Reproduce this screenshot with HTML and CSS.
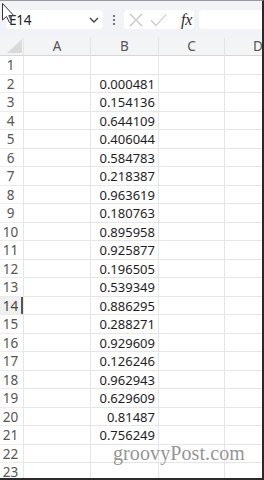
FILE: index.html
```html
<!DOCTYPE html>
<html>
<head>
<meta charset="utf-8">
<link rel="stylesheet" href="styles.css">
</head>
<body>
<div class="frame">
  <div class="toolbar">
    <div class="namebox">
      <span class="ref">E14</span>
      <svg class="chev" width="10" height="6" viewBox="0 0 10 6"><path d="M1 1 L5 5 L9 1" fill="none" stroke="#444" stroke-width="1.4"/></svg>
    </div>
    <svg class="kebab" width="4" height="12" viewBox="0 0 4 12"><circle cx="2" cy="2" r="1.1" fill="#555"/><circle cx="2" cy="6" r="1.1" fill="#555"/><circle cx="2" cy="10" r="1.1" fill="#555"/></svg>
    <div class="fxbox">
      <svg width="14" height="14" viewBox="0 0 14 14"><path d="M1 1 L13 13 M13 1 L1 13" stroke="#c4c4c4" stroke-width="1.1" fill="none"/></svg>
      <svg width="17" height="14" viewBox="0 0 17 14"><path d="M1 7.5 L6 12.5 L16 1.5" stroke="#c4c4c4" stroke-width="1.1" fill="none"/></svg>
      <span class="fx">fx</span>
    </div>
    <div class="formula"></div>
  </div>
  <div class="sheet">
    <div class="corner"><svg width="15" height="14" viewBox="0 0 15 14"><path d="M15 0 L15 14 L0 14 Z" fill="#dadada"/></svg></div>
    <div class="colh">A</div><div class="colh">B</div><div class="colh">C</div><div class="colh last">D</div>

    <div class="rowh">1</div><div class="cell"></div><div class="cell"></div><div class="cell"></div><div class="cell"></div>
    <div class="rowh">2</div><div class="cell"></div><div class="cell num">0.000481</div><div class="cell"></div><div class="cell"></div>
    <div class="rowh">3</div><div class="cell"></div><div class="cell num">0.154136</div><div class="cell"></div><div class="cell"></div>
    <div class="rowh">4</div><div class="cell"></div><div class="cell num">0.644109</div><div class="cell"></div><div class="cell"></div>
    <div class="rowh">5</div><div class="cell"></div><div class="cell num">0.406044</div><div class="cell"></div><div class="cell"></div>
    <div class="rowh">6</div><div class="cell"></div><div class="cell num">0.584783</div><div class="cell"></div><div class="cell"></div>
    <div class="rowh">7</div><div class="cell"></div><div class="cell num">0.218387</div><div class="cell"></div><div class="cell"></div>
    <div class="rowh">8</div><div class="cell"></div><div class="cell num">0.963619</div><div class="cell"></div><div class="cell"></div>
    <div class="rowh">9</div><div class="cell"></div><div class="cell num">0.180763</div><div class="cell"></div><div class="cell"></div>
    <div class="rowh">10</div><div class="cell"></div><div class="cell num">0.895958</div><div class="cell"></div><div class="cell"></div>
    <div class="rowh">11</div><div class="cell"></div><div class="cell num">0.925877</div><div class="cell"></div><div class="cell"></div>
    <div class="rowh">12</div><div class="cell"></div><div class="cell num">0.196505</div><div class="cell"></div><div class="cell"></div>
    <div class="rowh">13</div><div class="cell"></div><div class="cell num">0.539349</div><div class="cell"></div><div class="cell"></div>
    <div class="rowh sel">14</div><div class="cell"></div><div class="cell num">0.886295</div><div class="cell"></div><div class="cell"></div>
    <div class="rowh">15</div><div class="cell"></div><div class="cell num">0.288271</div><div class="cell"></div><div class="cell"></div>
    <div class="rowh">16</div><div class="cell"></div><div class="cell num">0.929609</div><div class="cell"></div><div class="cell"></div>
    <div class="rowh">17</div><div class="cell"></div><div class="cell num">0.126246</div><div class="cell"></div><div class="cell"></div>
    <div class="rowh">18</div><div class="cell"></div><div class="cell num">0.962943</div><div class="cell"></div><div class="cell"></div>
    <div class="rowh">19</div><div class="cell"></div><div class="cell num">0.629609</div><div class="cell"></div><div class="cell"></div>
    <div class="rowh">20</div><div class="cell"></div><div class="cell num">0.81487</div><div class="cell"></div><div class="cell"></div>
    <div class="rowh">21</div><div class="cell"></div><div class="cell num">0.756249</div><div class="cell"></div><div class="cell"></div>
    <div class="rowh">22</div><div class="cell"></div><div class="cell"></div><div class="cell"></div><div class="cell"></div>
    <div class="rowh">23</div><div class="cell"></div><div class="cell"></div><div class="cell"></div><div class="cell"></div>
  </div>
  <svg class="cursor" width="14" height="22" viewBox="0 0 14 22"><path d="M1.5 1.5 L1.5 18 L5.5 14.5 L8.5 20.5 L10.5 19.5 L7.8 13.6 L12.8 13.6 Z" fill="#fff" stroke="#333" stroke-width="1"/></svg>
  <div class="watermark">groovyPost.com</div>
</div>
</body>
</html>
```
FILE: styles.css
```css
html, body {
  margin: 0;
  padding: 0;
  background: #fff;
}
.frame {
  position: relative;
  width: 264px;
  height: 480px;
  box-sizing: border-box;
  border-top: 1px solid #9a9a9a;
  border-right: 2px solid #2a2a2a;
  border-bottom: 2px solid #2a2a2a;
  overflow: hidden;
  font-family: "Noto Sans", "Open Sans", sans-serif;
  background: #fff;
}
.toolbar {
  height: 37px;
  background: #f1f3f6;
  display: flex;
  align-items: flex-start;
  padding-top: 9px;
  box-sizing: border-box;
}
.namebox {
  margin-left: 6px;
  width: 97px;
  height: 19px;
  background: #fff;
  border-radius: 4px;
  display: flex;
  align-items: center;
  justify-content: space-between;
  padding: 0 4px 0 3px;
  box-sizing: border-box;
}
.ref {
  font-size: 13.5px;
  color: #222;
  letter-spacing: -0.2px;
}
.chev { margin-top: 1px; }
.kebab {
  margin: 4px 0 0 9px;
}
.fxbox {
  margin-left: 8px;
  width: 70px;
  height: 19px;
  background: #fff;
  border-radius: 4px;
  display: flex;
  align-items: center;
  gap: 7px;
  padding-left: 5px;
  box-sizing: border-box;
}
.fx {
  font-family: "Liberation Serif", "DejaVu Serif", serif;
  font-style: italic;
  font-size: 16px;
  color: #2a2a2a;
  margin-left: 7px;
  letter-spacing: -0.3px;
}
.formula {
  margin-left: 5px;
  flex: 1;
  height: 19px;
  background: #fff;
  border-radius: 4px 0 0 4px;
}
.sheet {
  display: grid;
  grid-template-columns: 23px 67px 68px 66px 67px;
  grid-template-rows: 18px repeat(23, 18.53px);
  background: #fff;
}
.corner {
  background: #f3f4f6;
  border-bottom: 1px solid #d6d6d6;
  box-sizing: border-box;
  display: flex;
  align-items: flex-end;
  justify-content: flex-end;
  padding: 0 1px 2px 0;
}
.colh {
  background: #f3f4f6;
  border-bottom: 1px solid #d6d6d6;
  border-left: 1px solid #e4e4e4;
  box-sizing: border-box;
  text-align: center;
  font-size: 13.5px;
  line-height: 17px;
  color: #555;
}
.rowh {
  background: #fff;
  border-bottom: 1px solid #ececec;
  box-sizing: border-box;
  font-size: 13.5px;
  line-height: 18px;
  color: #555;
  text-align: center;
  padding-right: 2px;
}
.rowh.sel {
  background: #f0f0f0;
  box-shadow: inset -2px 0 0 #555;
  color: #444;
}
.cell {
  border-left: 1px solid #e6e6e6;
  border-bottom: 1px solid #e6e6e6;
  box-sizing: border-box;
  font-size: 13px;
  line-height: 18px;
  color: #1e1e1e;
}
.num {
  text-align: right;
  padding-right: 3px;
}
.cursor {
  position: absolute;
  left: 1px;
  top: 1px;
}
.watermark {
  position: absolute;
  left: 113px;
  top: 441px;
  font-family: "Liberation Serif", serif;
  font-size: 20px;
  color: rgba(120, 120, 120, 0.8);
  letter-spacing: 0.1px;
}
```
